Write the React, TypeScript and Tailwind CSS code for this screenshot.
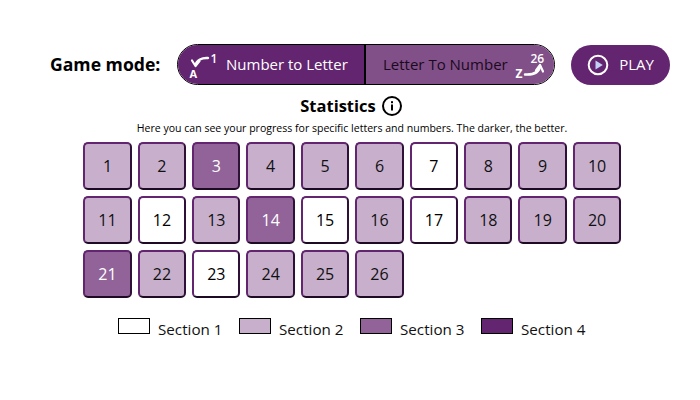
import React from 'react';

const FONT = 'font-["Open_Sans","Noto_Sans",sans-serif]';

// section of each tile, 1 to 26
const sections = [2, 2, 3, 2, 2, 2, 1, 2, 2, 2, 2, 1, 2, 3, 1, 2, 1, 2, 2, 2, 3, 2, 1, 2, 2, 2];

const tileColors: Record<number, string> = {
    1: 'bg-white text-black',
    2: 'bg-[#c8b0cd] text-[#111]',
    3: 'bg-[#916399] text-white',
};

const legend = [
    { label: 'Section 1', color: 'bg-white' },
    { label: 'Section 2', color: 'bg-[#c8b0cd]' },
    { label: 'Section 3', color: 'bg-[#916399]' },
    { label: 'Section 4', color: 'bg-[#632470]' },
];

const NumberToLetterIcon = () => (
    <svg width="36" height="32" viewBox="0 0 36 32" fill="none" className="shrink-0">
        <path d="M7.5 16 C8.5 11 14 8.5 20 9" stroke="white" strokeWidth="2.4" strokeLinecap="round" />
        <path d="M4 11.5 L7.5 17 L11.5 12" stroke="white" strokeWidth="2.2" strokeLinecap="round" strokeLinejoin="round" />
        <text x="22.5" y="14" fill="white" fontSize="12" fontWeight="600" fontFamily="Open Sans">1</text>
        <text x="1.5" y="29" fill="white" fontSize="11" fontWeight="700" fontFamily="Open Sans">A</text>
    </svg>
);

const LetterToNumberIcon = () => (
    <svg width="36" height="32" viewBox="0 0 36 32" fill="none" className="shrink-0">
        <path d="M15 25.5 C23 26 29 24 30 17" stroke="white" strokeWidth="2.4" strokeLinecap="round" />
        <path d="M26 21.5 L30 16 L33 22.5" stroke="white" strokeWidth="2.2" strokeLinecap="round" strokeLinejoin="round" />
        <text x="20.5" y="14" fill="white" fontSize="12" fontWeight="600" fontFamily="Open Sans">26</text>
        <text x="5.5" y="29" fill="white" fontSize="12" fontWeight="700" fontFamily="Open Sans">Z</text>
    </svg>
);

const PlayIcon = () => (
    <svg width="22" height="22" viewBox="0 0 22 22" fill="none">
        <circle cx="11" cy="11" r="9.3" stroke="white" strokeWidth="2" />
        <path d="M8.5 6.5 L15.8 11 L8.5 15.5 Z" fill="#c3d0f5" />
    </svg>
);

const InfoIcon = () => (
    <svg width="20" height="20" viewBox="0 0 20 20" fill="none">
        <circle cx="10" cy="10" r="9" stroke="black" strokeWidth="2" />
        <rect x="9" y="8.5" width="2" height="6" fill="black" />
        <rect x="9" y="5.2" width="2" height="2" fill="black" />
    </svg>
);

export default function App() {
    return (
        <div className={`w-[700px] h-[400px] bg-white overflow-hidden pt-[44px] ${FONT}`}>
            <div className="flex items-center pl-[50px]">
                <span className="w-[127px] text-[17.6px] font-bold text-black whitespace-nowrap">Game mode:</span>
                <div className="flex w-[378px] h-[41px] border border-black rounded-full overflow-hidden">
                    <div className="flex items-center w-[186px] h-full pl-[10px] bg-[#632470] text-white">
                        <NumberToLetterIcon />
                        <span className="ml-[2px] text-[15px] whitespace-nowrap">Number to Letter</span>
                    </div>
                    <div className="flex items-center justify-between flex-1 h-full pl-[17px] pr-[8px] border-l-2 border-black bg-[#825088] text-[#1a0a20]">
                        <span className="text-[15px] whitespace-nowrap">Letter To Number</span>
                        <LetterToNumberIcon />
                    </div>
                </div>
                <button className="flex items-center justify-center gap-[10px] ml-[16px] w-[99px] h-[40px] rounded-full bg-[#632470] text-white text-[15px]">
                    <PlayIcon />
                    PLAY
                </button>
            </div>

            <div className="flex items-center justify-center gap-[6px] mt-[9px] ml-[2px] h-[24px]">
                <h2 className="text-[16.5px] font-bold text-black">Statistics</h2>
                <InfoIcon />
            </div>
            <p className="mt-[3px] ml-[4px] text-center text-[10.56px] leading-[14px] text-black">
                Here you can see your progress for specific letters and numbers. The darker, the better.
            </p>

            <div className="grid grid-cols-10 gap-[6px] w-[538px] ml-[83.3px] mt-[7px]">
                {sections.map((section, i) => (
                    <div
                        key={i}
                        className={`flex items-center justify-center h-[48px] rounded-[5px] border-2 border-t-[#632470] border-l-[#632470] border-r-[#2f1038] border-b-[#1f0a26] text-[16px] ${tileColors[section]}`}
                    >
                        {i + 1}
                    </div>
                ))}
            </div>

            <div className="flex mt-[20px] ml-[118px]">
                {legend.map(item => (
                    <div key={item.label} className="flex items-start gap-[8px] w-[121px]">
                        <div className={`w-[32px] h-[16px] border border-black ${item.color}`} />
                        <span className="text-[15.2px] leading-[22px] text-[#111]">{item.label}</span>
                    </div>
                ))}
            </div>
        </div>
    );
}
